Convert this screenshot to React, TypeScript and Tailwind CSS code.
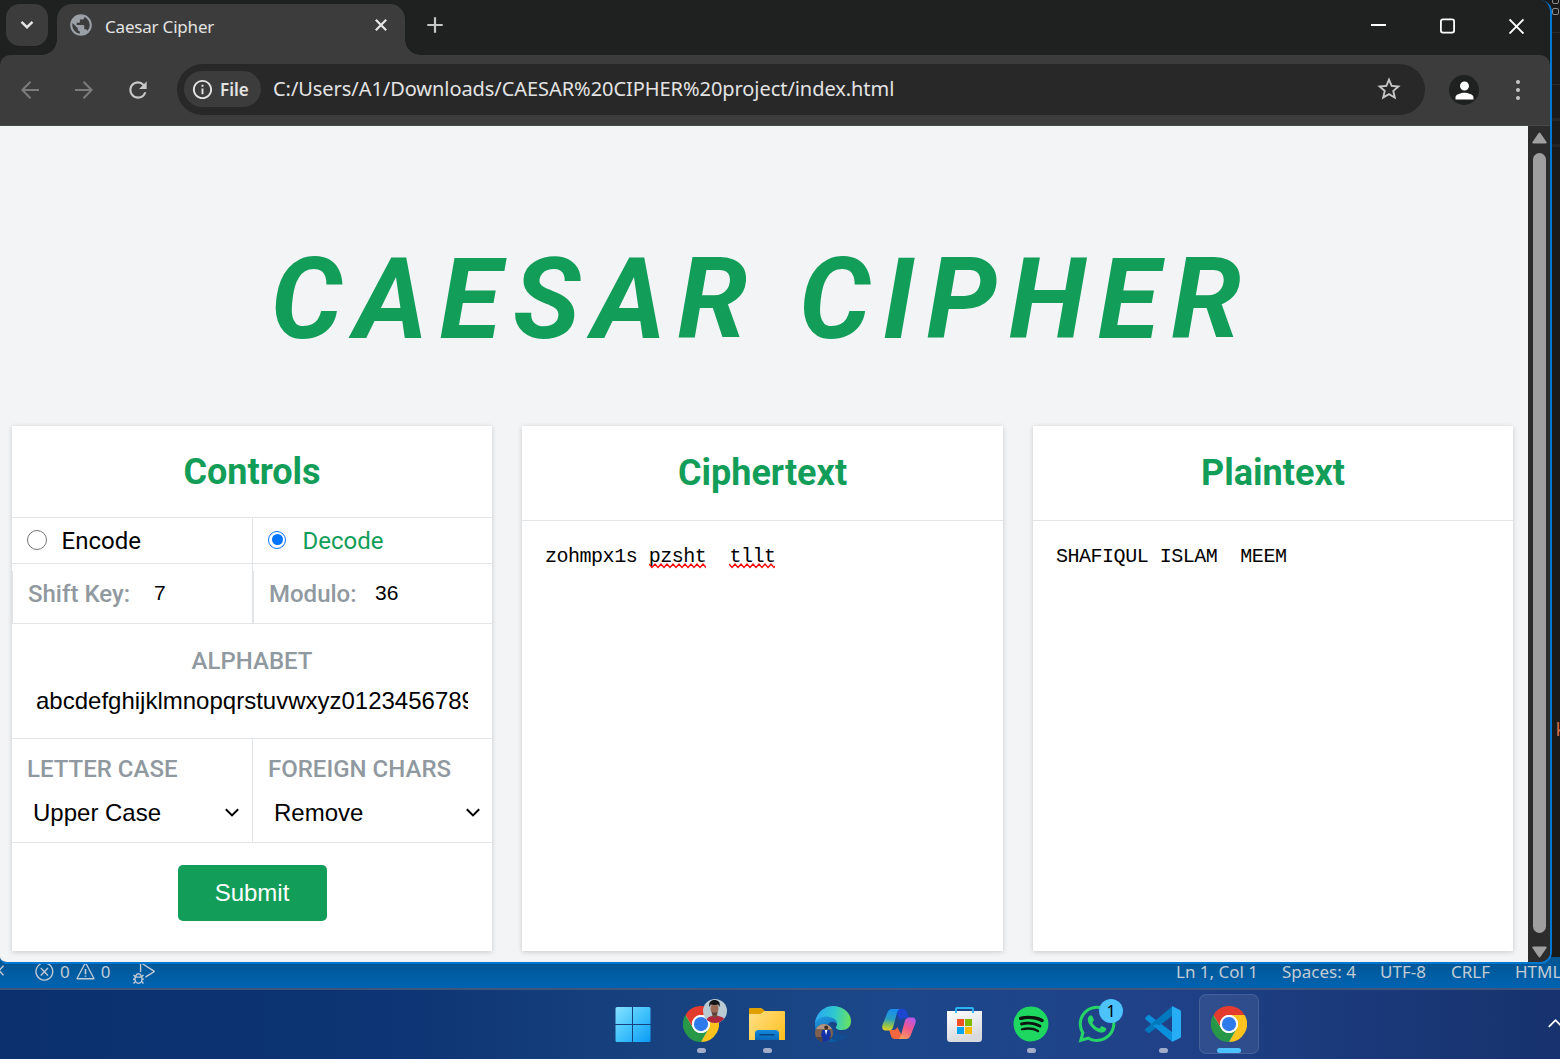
import React from 'react';
import {
  MdInfoOutline,
  MdPerson,
  MdPublic,
  MdRefresh,
  MdStarBorder,
} from 'react-icons/md';
import { VscDebugAlt, VscError, VscWarning } from 'react-icons/vsc';
import { FaSpotify, FaWhatsapp } from 'react-icons/fa';

/* ---------- Browser chrome ---------- */

function TabStrip() {
  return (
    <div className="relative flex h-[55px] shrink-0 items-start bg-[#1f2120]">
      <button className="ml-[6px] mt-1 flex h-[42px] w-[42px] items-center justify-center rounded-[14px] bg-[#3c3c3c]">
        <svg width="14" height="10" viewBox="0 0 14 10" fill="none" stroke="#e6e6e6" strokeWidth="2.4">
          <path d="M1.5 1.8 7 7.2l5.500-5.400" />
        </svg>
      </button>
      <div className="relative ml-[9px] mt-1 flex h-[51px] w-[348px] items-center rounded-t-[15px] bg-[#3c3c3c] pb-[7px]">
        <MdPublic className="mb-[2px] ml-[11px] h-[26px] w-[26px] text-[#9aa0a6]" />
        <span className="ml-[11px] font-['Noto_Sans'] text-[17px] leading-none tracking-[-0.200px] text-[#e3e3e3]">
          Caesar Cipher
        </span>
        <svg className="absolute left-[318px] top-[15px]" width="12" height="12" viewBox="0 0 12 12" stroke="#e6e6e6" strokeWidth="2.2">
          <path d="M.8.8 11.200 11.200M11.200.8.8 11.200" />
        </svg>
        <span className="absolute -left-[15px] bottom-0 h-[15px] w-[15px] bg-[radial-gradient(circle_at_0_0,transparent_14.500px,#3c3c3c_15px)]" />
        <span className="absolute -right-[15px] bottom-0 h-[15px] w-[15px] bg-[radial-gradient(circle_at_100%_0,transparent_14.500px,#3c3c3c_15px)]" />
      </div>
      <svg className="ml-[22px] mt-[17px]" width="16" height="16" viewBox="0 0 16 16" stroke="#c7c7c7" strokeWidth="2.200">
        <path d="M8 .3v15.400M.3 8h15.400" />
      </svg>
      <div className="ml-auto mr-[26px] mt-[18px] flex h-4 items-center gap-[54px]">
        <svg width="15" height="16" viewBox="0 0 15 16">
          <path d="M0 7h15" stroke="#fff" strokeWidth="2" />
        </svg>
        <svg width="15" height="16" viewBox="0 0 15 16" fill="none" stroke="#fff" strokeWidth="1.800">
          <rect x=".9" y="1.400" width="13.200" height="13.200" rx="2" />
        </svg>
        <svg width="15" height="16" viewBox="0 0 15 16" stroke="#fff" strokeWidth="1.900">
          <path d="M.5 1.500 14.500 15.500M14.500 1.500.5 15.500" />
        </svg>
      </div>
    </div>
  );
}

function Toolbar() {
  return (
    <div className="shrink-0 bg-[#1f2120]">
      <div className="flex h-[71px] items-center rounded-t-[10px] border-b border-[#474a49] bg-[#3c3c3c]">
        <svg className="ml-[21px]" width="18" height="18" viewBox="0 0 18 18" fill="none" stroke="#7c7c7c" strokeWidth="2">
          <path d="M18 9H1.500M9.500.8 1.300 9l8.200 8.200" />
        </svg>
        <svg className="ml-[36px]" width="18" height="18" viewBox="0 0 18 18" fill="none" stroke="#7c7c7c" strokeWidth="2">
          <path d="M0 9h16.500M8.500.8 16.700 9l-8.200 8.200" />
        </svg>
        <MdRefresh className="ml-[32px] h-[26px] w-[26px] text-[#c7c7c7]" />
        <div className="mb-[2px] ml-[26px] flex h-[51px] w-[1248px] items-center rounded-full bg-[#282828] pl-[7px]">
          <div className="flex h-[36px] w-[77px] items-center rounded-full bg-[#3c3c3c] pl-[7px]">
            <MdInfoOutline className="h-[23px] w-[23px] text-[#e3e3e3]" />
            <span className="ml-[6px] font-['Noto_Sans'] text-[17px] font-semibold leading-none text-[#e3e3e3]">
              File
            </span>
          </div>
          <span className="ml-3 font-['Noto_Sans'] text-[20px] leading-none tracking-[-0.060px] text-[#e3e3e3]">
            C:/Users/A1/Downloads/CAESAR%20CIPHER%20project/index.html
          </span>
          <MdStarBorder className="ml-auto mr-[22px] h-[28px] w-[28px] text-[#c7c7c7]" />
        </div>
        <div className="ml-6 flex h-[30px] w-[30px] items-center justify-center rounded-full bg-[#1f2120]">
          <MdPerson className="h-[27px] w-[27px] text-white" />
        </div>
        <div className="ml-[37px] flex flex-col gap-1">
          <span className="h-1 w-1 rounded-full bg-[#c7c7c7]" />
          <span className="h-1 w-1 rounded-full bg-[#c7c7c7]" />
          <span className="h-1 w-1 rounded-full bg-[#c7c7c7]" />
        </div>
      </div>
    </div>
  );
}

function Scrollbar() {
  return (
    <div className="flex w-[22px] shrink-0 flex-col items-center bg-[#2c2c2c] pt-[6px]">
      <svg width="15" height="12" viewBox="0 0 15 12" fill="#9f9f9f" stroke="#9f9f9f" strokeWidth="2" strokeLinejoin="round">
        <path d="M7.500 1.500 13.700 10.500H1.300z" />
      </svg>
      <div className="mt-[9px] h-[780px] w-[13px] rounded-full bg-[#9f9f9f]" />
      <svg className="mt-[13px]" width="15" height="12" viewBox="0 0 15 12" fill="#9f9f9f" stroke="#9f9f9f" strokeWidth="2" strokeLinejoin="round">
        <path d="M7.500 10.500 1.300 1.500h12.400z" />
      </svg>
    </div>
  );
}

/* ---------- Caesar cipher page ---------- */

const cardClass = 'flex h-[525px] flex-col bg-white shadow-[0_1px_5px_rgba(0,0,0,0.180)]';
const labelClass = 'text-[24px] font-medium leading-[28px] text-[#90999f]';

function CardTitle({ children, tall }: { children: React.ReactNode; tall?: boolean }) {
  return (
    <h2
      className={`flex shrink-0 items-center justify-center border-b border-[#e1e5e8] text-[36px] font-bold leading-none text-[#129e59] ${
        tall ? 'h-[95px]' : 'h-[92px]'
      }`}
    >
      {children}
    </h2>
  );
}

function Select({ value }: { value: string }) {
  return (
    <div className="mt-[16px] flex items-center pl-[6px] pr-[13px] font-['Liberation_Sans'] text-[24px] leading-[28px] text-black">
      {value}
      <svg className="mb-[2px] ml-auto" width="14" height="9" viewBox="0 0 14 9" fill="none" stroke="#000" strokeWidth="2">
        <path d="M.8 1.200 7 7.400l6.200-6.200" />
      </svg>
    </div>
  );
}

function Controls() {
  return (
    <section className={`${cardClass} w-[480px]`}>
      <CardTitle>Controls</CardTitle>
      <div className="flex h-[46px] shrink-0 border-b border-[#e1e5e8] text-[24px] leading-none">
        <div className="flex w-[241px] items-center border-r border-[#e1e5e8] pl-[15px] text-black">
          <span className="mb-px h-[20px] w-[20px] rounded-full border-[1.500px] border-[#767676]" />
          <span className="ml-[14.500px]">Encode</span>
        </div>
        <div className="flex items-center pl-[15px] text-[#129e59]">
          <span className="mb-[2px] flex h-[18px] w-[18px] items-center justify-center rounded-full border-[1.500px] border-[#0075ff]">
            <span className="h-[11px] w-[11px] rounded-full bg-[#0075ff]" />
          </span>
          <span className="ml-[16.500px]">Decode</span>
        </div>
      </div>
      <div className="flex h-[60px] shrink-0 border-b border-[#e1e5e8] leading-none">
        <div className="flex w-[241px] items-end border-r border-[#e1e5e8]">
          <div className="flex h-[52px] items-center border-l border-[#e1e5e8] pb-[7px] pl-[15px]">
            <span className={labelClass}>Shift Key:</span>
            <span className="mb-[3px] ml-6 font-['Liberation_Sans'] text-[21px]">7</span>
          </div>
        </div>
        <div className="flex items-end">
          <div className="flex h-[52px] items-center border-l border-[#e1e5e8] pb-[7px] pl-[15px]">
            <span className={labelClass}>Modulo:</span>
            <span className="mb-[3px] ml-[18.500px] font-['Liberation_Sans'] text-[21px]">36</span>
          </div>
        </div>
      </div>
      <div className="h-[115px] shrink-0 border-b border-[#e1e5e8] px-6 pt-[23px] text-center">
        <div className={labelClass}>ALPHABET</div>
        <div className="mt-[12px] overflow-hidden whitespace-nowrap text-left font-['Liberation_Sans'] text-[24px] leading-[28px]">
          abcdefghijklmnopqrstuvwxyz0123456789
        </div>
      </div>
      <div className="flex h-[104px] shrink-0 border-b border-[#e1e5e8]">
        <div className="w-[241px] border-r border-[#e1e5e8] pt-4">
          <div className={`${labelClass} pl-[15px]`}>LETTER CASE</div>
          <div className="pl-[15px]">
            <Select value="Upper Case" />
          </div>
        </div>
        <div className="w-[239px] pt-4">
          <div className={`${labelClass} pl-[15px]`}>FOREIGN CHARS</div>
          <div className="-mr-[1px] pl-[15px]">
            <Select value="Remove" />
          </div>
        </div>
      </div>
      <div className="flex justify-center pt-[22px]">
        <button className="h-[56px] w-[149px] rounded-[5px] bg-[#129e59] font-['Liberation_Sans'] text-[24px] leading-none text-white">
          Submit
        </button>
      </div>
    </section>
  );
}

function Misspelled({ children, width }: { children: string; width: number }) {
  const waves = Math.ceil(width / 6);
  const d = 'M0 1' + 'l3 3.500l3-3.500'.repeat(waves);
  return (
    <span className="relative">
      {children}
      <svg className="absolute left-0 top-[18px]" width={width} height="6" viewBox={`0 0 ${width} 6`} fill="none" stroke="#f00" strokeWidth="1.200">
        <path d={d} />
      </svg>
    </span>
  );
}

function TextCard({ title, children, className }: { title: string; children: React.ReactNode; className: string }) {
  return (
    <section className={`${cardClass} ${className}`}>
      <CardTitle tall>{title}</CardTitle>
      <div className="whitespace-pre pl-[23px] pt-[26px] font-['Liberation_Mono'] text-[20px] leading-[20px] tracking-[-0.480px] text-black">
        {children}
      </div>
    </section>
  );
}

function Page() {
  return (
    <main className="w-[1528px] shrink-0 bg-[#f2f4f6] font-['Roboto']">
      <h1 className="flex h-[300px] items-center justify-center whitespace-nowrap pr-1 pt-[49px] text-[112.500px] font-bold italic leading-none tracking-[12px] text-[#129e59]">
        CAESAR CIPHER
      </h1>
      <div className="flex gap-[30px] pl-3">
        <Controls />
        <TextCard title="Ciphertext" className="w-[481px]">
          zohmpx1s <Misspelled width={57}>pzsht</Misspelled>
          {'  '}
          <Misspelled width={46}>tllt</Misspelled>
        </TextCard>
        <TextCard title="Plaintext" className="w-[480px]">
          {'SHAFIQUL ISLAM  MEEM'}
        </TextCard>
      </div>
    </main>
  );
}

/* ---------- Desktop behind the window ---------- */

function EditorStrip() {
  return (
    <div className="absolute right-0 top-0 h-[957px] w-[12px] bg-[#1a1a1a]">
      <div className="absolute left-[4px] top-[-4px] h-[8px] w-[7px] rounded-[2px] border border-[#8a8a8a]" />
      <div className="absolute left-[4px] top-[8px] h-[7px] w-[7px] rounded-[2px] border border-[#8a8a8a]" />
      <div className="absolute top-[32px] h-px w-full bg-[#2b2b2b]" />
      <div className="absolute top-[84px] h-px w-full bg-[#2b2b2b]" />
      <div className="absolute top-[118px] h-[3px] w-full bg-[#252526]" />
      <div className="absolute top-[144px] h-[3px] w-full bg-[#252526]" />
      <span className="absolute left-[-3px] top-[722px] font-['DejaVu_Sans_Mono'] text-[17px] leading-none text-[#ce7048]">
        :k
      </span>
    </div>
  );
}

function StatusBar() {
  return (
    <div className="absolute left-0 top-[957px] flex h-[33px] w-full items-center overflow-hidden whitespace-nowrap border-b-2 border-[#40547c] bg-linear-to-b from-[#005796] from-20% to-[#0063b1] pb-[2px] font-['Noto_Sans'] text-[17px] leading-none text-[#c3ccd6]">
      <svg className="ml-[-6px] shrink-0" width="10" height="14" viewBox="0 0 10 14" fill="none" stroke="#c3ccd6" strokeWidth="1.400">
        <path d="M9.500.8 5 5.500l4.500 4.700" />
      </svg>
      <VscError className="ml-[30px] h-[21px] w-[21px] shrink-0" />
      <span className="ml-[5px]">0</span>
      <VscWarning className="ml-[5px] h-[21px] w-[21px] shrink-0" />
      <span className="ml-[5px]">0</span>
      <VscDebugAlt className="ml-[23px] mt-[2px] h-[22px] w-[22px] shrink-0" />
      <div className="absolute left-[1176px] flex">
        <span className="w-[106px]">Ln 1, Col 1</span>
        <span className="w-[98px]">Spaces: 4</span>
        <span className="w-[71px]">UTF-8</span>
        <span className="w-[64px]">CRLF</span>
        <span>HTML</span>
      </div>
    </div>
  );
}

function ChromeLogo() {
  return (
    <svg width="36" height="36" viewBox="0 0 48 48">
      <circle cx="24" cy="24" r="23" fill="#fff" />
      <path d="M3.200 12A24 24 0 0 1 44.800 12H24a12 12 0 0 0-10.400 18z" fill="#e33b2e" />
      <path d="M44.800 12A24 24 0 0 1 24 48L34.400 30A12 12 0 0 0 24 12z" fill="#fcc31e" />
      <path d="M24 48A24 24 0 0 1 3.200 12L13.600 30A12 12 0 0 0 34.400 30z" fill="#279847" />
      <circle cx="24" cy="24" r="12" fill="#fff" />
      <circle cx="24" cy="24" r="9.500" fill="#2f7bed" />
    </svg>
  );
}

function ChromeProfile() {
  return (
    <div className="relative">
      <ChromeLogo />
      <svg className="absolute left-[20px] top-[-7px]" width="24" height="24" viewBox="0 0 24 24">
        <defs>
          <clipPath id="avatar">
            <circle cx="12" cy="12" r="12" />
          </clipPath>
        </defs>
        <g clipPath="url(#avatar)">
          <rect width="24" height="24" fill="#b9cad3" />
          <path d="M3 24c0-5 3-6.500 6-7h6c4 .5 7 2 8 7z" fill="#b02a3c" />
          <path d="M9.300 12h5v5.500c-1.500 1.500-3.500 1.500-5 0z" fill="#74503f" />
          <ellipse cx="11.500" cy="9.500" rx="4" ry="5.300" fill="#9a6c57" />
          <path d="M8.500 13c2 1 4.200 1 6 0-.5 2.500-1.700 3.300-3 3.300s-2.500-.8-3-3.300z" fill="#5b3f36" />
          <path d="M6.300 8C5.500 3 8 1 11.500 1s6.300 2 5 7l-1.300-2.500c-2 .6-5 .6-7.400 0z" fill="#15161a" />
        </g>
      </svg>
    </div>
  );
}

function WindowsLogo() {
  return (
    <svg width="36" height="36" viewBox="0 0 36 36">
      <defs>
        <linearGradient id="win" x1="0" y1="0" x2="36" y2="36" gradientUnits="userSpaceOnUse">
          <stop stopColor="#8ae2ff" />
          <stop offset=".5" stopColor="#42c3fb" />
          <stop offset="1" stopColor="#0a99f5" />
        </linearGradient>
      </defs>
      <path fill="url(#win)" d="M2 1h15v17H.500V2.500A1.500 1.500 0 0 1 2 1zM18 1h16a1.500 1.500 0 0 1 1.500 1.500V18H18zM.500 19H17v17H2a1.500 1.500 0 0 1-1.500-1.500zM18 19h17.500v15.500A1.500 1.500 0 0 1 34 36H18z" />
    </svg>
  );
}

function Explorer() {
  return (
    <svg width="36" height="36" viewBox="0 0 36 36">
      <defs>
        <linearGradient id="folder" x1="0" y1="5" x2="36" y2="34" gradientUnits="userSpaceOnUse">
          <stop stopColor="#ffe18a" />
          <stop offset="1" stopColor="#fdbf1c" />
        </linearGradient>
        <linearGradient id="tray" x1="0" y1="24" x2="0" y2="34" gradientUnits="userSpaceOnUse">
          <stop stopColor="#1488dc" />
          <stop offset="1" stopColor="#0a68b8" />
        </linearGradient>
      </defs>
      <path fill="#dfa000" d="M1 2h11.500L16 5v6H0V3a1 1 0 0 1 1-1z" />
      <path fill="url(#folder)" d="M0 8h11.500l4-3H35a1 1 0 0 1 1 1v28H0z" />
      <path fill="url(#tray)" d="M6 34v-6.500a3.500 3.500 0 0 1 3.500-3.500h17a3.500 3.500 0 0 1 3.500 3.500V34z" />
      <path d="M11 28.800h14" stroke="#07457f" strokeWidth="1.600" strokeLinecap="round" />
    </svg>
  );
}

function EdgeLogo() {
  return (
    <svg width="36" height="36" viewBox="0 0 36 36">
      <defs>
        <linearGradient id="edgeTop" x1="2" y1="10" x2="36" y2="14" gradientUnits="userSpaceOnUse">
          <stop stopColor="#2ba9f0" />
          <stop offset=".5" stopColor="#2ec8d0" />
          <stop offset="1" stopColor="#6be35a" />
        </linearGradient>
        <linearGradient id="edgeLeft" x1="4" y1="10" x2="14" y2="36" gradientUnits="userSpaceOnUse">
          <stop stopColor="#219be2" />
          <stop offset="1" stopColor="#0c59a4" />
        </linearGradient>
        <clipPath id="edgeAvatar">
          <circle cx="9" cy="27" r="9" />
        </clipPath>
      </defs>
      <path fill="#124d92" d="M13 15c-3 8 1 18 10 20.500 5-.8 8.500-3.500 11-7.500-6 3-13 1-14-5z" />
      <path fill="url(#edgeLeft)" d="M0 17C1 11 7 8 12 8c7 0 11 5 10 10-4-4-9-2-10 3-1 7 4 13 11 14.500C11 38 0 31 0 20z" />
      <path fill="url(#edgeTop)" d="M0 17C1 7 9 0 18 0c10 0 18 7 18 15 0 6-4 9-9 9-4 0-6.500-1.500-6-3 2-2.500 1-6-1.500-8C13 8.500 4 10 0 17z" />
      <g clipPath="url(#edgeAvatar)">
        <rect y="18" width="18" height="18" fill="#80614f" />
        <rect y="18" width="18" height="5" fill="#b39682" />
        <rect y="31" width="18" height="5" fill="#4b4444" />
        <path d="M7 24h8l1 6-1.500 1v5h-7v-5L6 30z" fill="#1233a6" />
        <path d="M9.800 24h2.600l-1.300 5z" fill="#fff" />
        <circle cx="11.200" cy="21.500" r="2" fill="#3c2a24" />
      </g>
    </svg>
  );
}

function CopilotLogo() {
  return (
    <svg width="36" height="36" viewBox="0 0 36 36">
      <defs>
        <linearGradient id="cpA" x1="8" y1="3" x2="6" y2="25" gradientUnits="userSpaceOnUse">
          <stop stopColor="#178df0" />
          <stop offset=".45" stopColor="#2a9fc0" />
          <stop offset=".75" stopColor="#92c44c" />
          <stop offset="1" stopColor="#f0cd24" />
        </linearGradient>
        <linearGradient id="cpB" x1="30" y1="12" x2="20" y2="33" gradientUnits="userSpaceOnUse">
          <stop stopColor="#b558e8" />
          <stop offset=".45" stopColor="#f0568c" />
          <stop offset="1" stopColor="#ffa05c" />
        </linearGradient>
      </defs>
      <path fill="#1c46d0" d="M13 3h9c2.500 0 3.500 1.200 4.200 3.500L27.800 12H24c-2.500 0-3.500 1-4.200 3L17 10z" />
      <path fill="#f4673e" d="M23 33h-9c-2.500 0-3.500-1.200-4.200-3.500L8.200 24H12c2.500 0 3.500-1 4.200-3L19 26z" />
      <path fill="url(#cpA)" d="M11 3h8c-2 .5-2.500 2-3.200 4.500l-3.500 13c-.8 3-2.300 4-4.800 4h-3c-3 0-3.800-2.500-3-5.500L6 7.500C7 4.500 8.500 3 11 3z" />
      <path fill="url(#cpB)" d="M25 33h-8c2-.5 2.500-2 3.200-4.500l3.500-13c.8-3 2.300-4 4.800-4h3c3 0 3.800 2.500 3 5.500L30 28.500C29 31.500 27.500 33 25 33z" />
    </svg>
  );
}

function StoreLogo() {
  return (
    <svg width="36" height="36" viewBox="0 0 36 36">
      <defs>
        <linearGradient id="bag" x1="0" y1="5" x2="10" y2="36" gradientUnits="userSpaceOnUse">
          <stop stopColor="#fff" />
          <stop offset="1" stopColor="#d9dadd" />
        </linearGradient>
      </defs>
      <path d="M0 5h35v27.500a3.500 3.500 0 0 1-3.500 3.500h-28A3.500 3.500 0 0 1 0 32.500z" fill="url(#bag)" />
      <path d="M9 7V2.800Q9 2 10 2h15q1 0 1 .8V7" fill="none" stroke="#2cb5f5" strokeWidth="1.900" />
      <path d="M10 13h7v7h-7z" fill="#f25022" />
      <path d="M18 13h7v7h-7z" fill="#7fba00" />
      <path d="M10 21h7v7h-7z" fill="#00a4ef" />
      <path d="M18 21h7v7h-7z" fill="#ffb900" />
    </svg>
  );
}

function SpotifyLogo() {
  return (
    <div className="relative h-[36px] w-[36px]">
      <span className="absolute inset-[4px] rounded-full bg-[#0d1510]" />
      <FaSpotify className="relative h-[36px] w-[36px] text-[#1ed760]" />
    </div>
  );
}

function WhatsAppLogo() {
  return (
    <div className="relative">
      <FaWhatsapp className="-m-[3px] h-[42px] w-[42px] text-[#25d366]" />
      <span className="absolute left-[20px] top-[-7px] flex h-6 w-6 items-center justify-center rounded-full bg-[#4cc2ff] font-['Noto_Sans'] text-[16px] leading-none text-black">
        1
      </span>
    </div>
  );
}

function VsCodeLogo() {
  return (
    <svg width="36" height="36" viewBox="0 0 36 36">
      <path d="M.4 11.600 3 9.300q.8-.6 1.700 0L27 26v9.500L.5 13.200q-.8-.8-.1-1.600z" fill="#0a8fdc" />
      <path d="M.4 24.400 3 26.700q.8.6 1.700 0L27 10V.500L.5 22.800q-.8.800-.1 1.600z" fill="#0078bd" />
      <path d="M12 18 19 23.200 27 29v6.500L8 19.500z" fill="#0a8fdc" />
      <path d="M27 0v36l8-4q1-.5 1-1.600V5.600Q36 4.500 35 4z" fill="#27adf5" />
    </svg>
  );
}

type TaskbarApp = { icon: React.ReactNode; state?: 'open' | 'active' };

const apps: TaskbarApp[] = [
  { icon: <WindowsLogo /> },
  { icon: <ChromeProfile />, state: 'open' },
  { icon: <Explorer />, state: 'open' },
  { icon: <EdgeLogo /> },
  { icon: <CopilotLogo /> },
  { icon: <StoreLogo /> },
  { icon: <SpotifyLogo />, state: 'open' },
  { icon: <WhatsAppLogo /> },
  { icon: <VsCodeLogo />, state: 'open' },
  { icon: <ChromeLogo />, state: 'active' },
];

function Taskbar() {
  return (
    <div className="absolute left-0 top-[990px] flex h-[69px] w-full bg-[linear-gradient(90deg,#0b306d_0%,#0d3474_25%,#17427f_42%,#1c478a_58%,#204188_75%,#1b3a7c_85%,#17326d_100%)] pl-[600px] pt-1">
      {apps.map((app, i) => (
        <div
          key={i}
          className={`relative mr-[3px] flex h-[60px] w-[60px] items-center justify-center rounded-[7px] ${
            i === 1 ? 'ml-[5px]' : 'ml-[3px]'
          } ${app.state === 'active' ? 'border border-white/10 bg-white/8' : ''}`}
        >
          {app.icon}
          {app.state === 'open' && (
            <span className="absolute bottom-[1px] left-[26px] h-[5px] w-[9px] rounded-full bg-[#a2adc9]" />
          )}
          {app.state === 'active' && (
            <span className="absolute bottom-0 left-[17px] h-[5px] w-[24px] rounded-full bg-[#4cc2ff]" />
          )}
        </div>
      ))}
      <svg className="ml-auto mr-[-2px] mt-[24px]" width="14" height="10" viewBox="0 0 14 10" fill="none" stroke="#fff" strokeWidth="1.800">
        <path d="M.8 8.800 7.500 2.200l6.500 6.500" />
      </svg>
    </div>
  );
}

export default function App() {
  return (
    <div className="relative h-[1059px] w-[1560px] overflow-hidden bg-[#1a1a1a]">
      <StatusBar />
      <EditorStrip />
      <Taskbar />
      <div className="absolute left-0 top-0 flex h-[964px] w-[1552px] flex-col overflow-hidden rounded-bl-[7px] rounded-br-[12px] rounded-tr-[12px] border-b-2 border-r-2 border-[#0078d4] bg-[#1f2120]">
        <TabStrip />
        <Toolbar />
        <div className="flex min-h-0 flex-1">
          <Page />
          <Scrollbar />
        </div>
      </div>
    </div>
  );
}
